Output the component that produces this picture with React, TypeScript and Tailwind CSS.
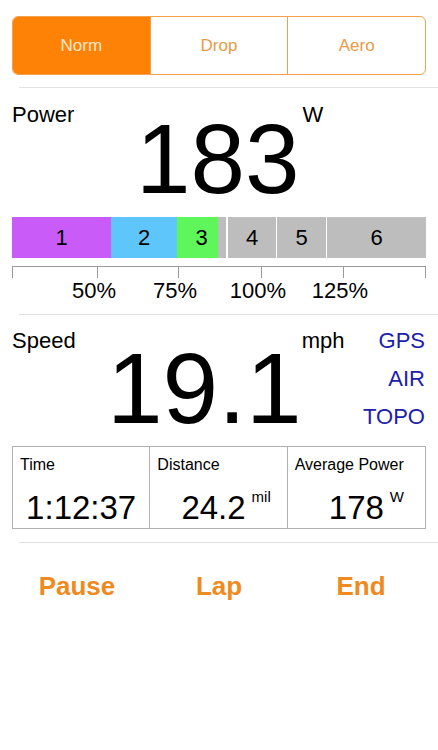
import React from "react"

const zones = [
  { label: "1", w: "w-[99px]", fill: "bg-[#c95cf8]" },
  { label: "2", w: "w-[66px]", fill: "bg-[#5ec6fa]" },
]

const ticks = [
  { x: 85, label: "50%" },
  { x: 166, label: "75%" },
  { x: 249, label: "100%" },
  { x: 331, label: "125%" },
]

const stats = [
  { label: "Time", value: "1:12:37", unit: "", shift: "" },
  { label: "Distance", value: "24.2", unit: "mil", shift: "-ml-[10px]" },
  { label: "Average Power", value: "178", unit: "W", shift: "" },
]

function Separator({ className = "" }: { className?: string }) {
  return <div className={`ml-[19px] h-px bg-[#e2e2e2] ${className}`} />
}

export default function App() {
  return (
    <div className="w-[438px] h-[750px] bg-white text-black font-['Liberation_Sans',Arial,sans-serif] overflow-hidden">
      {/* Riding position */}
      <div className="mx-[12px] mt-[16px] h-[59px] flex border border-[#f4a04c] rounded-[6px] overflow-hidden text-[17px]">
        <div className="flex-1 flex items-center justify-center bg-[#fd8205] text-[#fde6cc]">Norm</div>
        <div className="flex-1 flex items-center justify-center border-l border-[#f0a050] text-[#eb9a45]">Drop</div>
        <div className="flex-1 flex items-center justify-center border-l border-[#f0a050] text-[#eb9a45]">Aero</div>
      </div>

      <Separator className="mt-[12px]" />

      {/* Power */}
      <div className="flex items-start pt-[16px]">
        <div className="w-[136px] pl-[12px] text-[22px] leading-none">Power</div>
        <div className="mt-[6px] text-[98px] leading-none">183</div>
        <div className="ml-[3px] text-[22px] leading-none">W</div>
      </div>

      <div className="mx-[12px] mt-[9px] h-[41px] flex text-[22px] leading-none">
        {zones.map((z) => (
          <div key={z.label} className={`${z.w} ${z.fill} flex items-center justify-center`}>
            {z.label}
          </div>
        ))}
        <div className="w-[49px] flex bg-[#bdbdbd]">
          <div className="w-[41px] bg-[#5ff65c] flex items-center justify-center pl-[8px]">3</div>
        </div>
        <div className="w-[48px] ml-[2px] bg-[#bdbdbd] flex items-center justify-center">4</div>
        <div className="w-[49px] ml-px bg-[#bdbdbd] flex items-center justify-center">5</div>
        <div className="flex-1 ml-px bg-[#bdbdbd] flex items-center justify-center">6</div>
      </div>

      {/* Scale */}
      <div className="relative mx-[12px] mt-[8px] h-[36px]">
        <svg width="414" height="13" className="block">
          <line x1="0.5" y1="0.5" x2="413.5" y2="0.5" stroke="#9a9a9a" strokeWidth="1" />
          <line x1="0.5" y1="0" x2="0.5" y2="12" stroke="#9a9a9a" strokeWidth="1" />
          <line x1="413.5" y1="0" x2="413.5" y2="12" stroke="#9a9a9a" strokeWidth="1" />
          {ticks.map((t) => (
            <line key={t.label} x1={t.x + 0.5} y1="0" x2={t.x + 0.5} y2="12" stroke="#9a9a9a" strokeWidth="1" />
          ))}
        </svg>
        {ticks.map((t) => (
          <div
            key={t.label}
            className="absolute top-[14px] -translate-x-1/2 text-[22px] leading-none"
            style={{ left: t.x - 3 }}
          >
            {t.label}
          </div>
        ))}
      </div>

      <Separator className="mt-[12px]" />

      {/* Speed */}
      <div className="flex items-start pt-[15px]">
        <div className="w-[107px] pl-[12px] text-[22px] leading-none">Speed</div>
        <div className="mt-[8px] text-[100px] leading-none">19.1</div>
        <div className="text-[22px] leading-none">mph</div>
        <div className="flex-1 pr-[13px] flex flex-col items-end gap-4 text-[22px] leading-none text-[#2020aa]">
          <div>GPS</div>
          <div>AIR</div>
          <div>TOPO</div>
        </div>
      </div>

      {/* Stats */}
      <div className="mx-[12px] mt-[8px] h-[83px] grid grid-cols-3 border border-[#b0b0b0] divide-x divide-[#b0b0b0]">
        {stats.map((s) => (
          <div key={s.label} className="flex flex-col pt-[10px] pl-[7px]">
            <div className="text-[16px] leading-none">{s.label}</div>
            <div className="mt-[18px] flex justify-center pr-[7px]">
              <span className={`relative text-[33px] leading-none ${s.shift}`}>
                {s.value}
                {s.unit && (
                  <span className="absolute left-full top-[-2px] ml-[6px] text-[15px] leading-none">{s.unit}</span>
                )}
              </span>
            </div>
          </div>
        ))}
      </div>

      <Separator className="mt-[13px]" />

      {/* Controls */}
      <div className="px-[6px] pt-[30px] grid grid-cols-3 text-[26px] font-bold leading-none text-[#ee8a1e]">
        <div className="text-center">Pause</div>
        <div className="text-center">Lap</div>
        <div className="text-center">End</div>
      </div>
    </div>
  )
}
